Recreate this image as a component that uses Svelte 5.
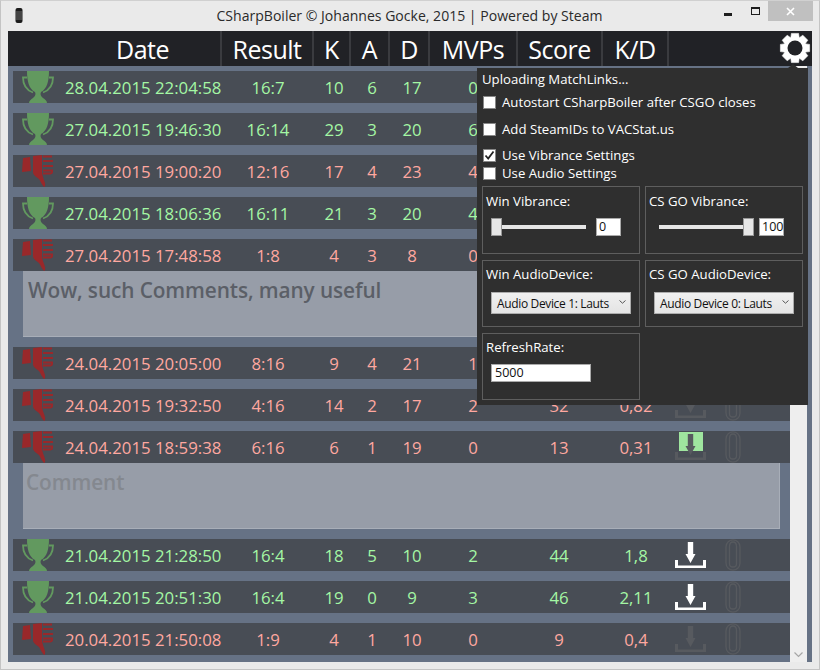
<script>
  const W = 'win', L = 'loss';
  const rows = [
    { r: W, d: '28.04.2015 22:04:58', s: '16:7', k: 10, a: 6, de: 17, m: 0, sc: 0, kd: '', dl: 'none' },
    { r: W, d: '27.04.2015 19:46:30', s: '16:14', k: 29, a: 3, de: 20, m: 6, sc: 0, kd: '', dl: 'none' },
    { r: L, d: '27.04.2015 19:00:20', s: '12:16', k: 17, a: 4, de: 23, m: 4, sc: 0, kd: '', dl: 'none' },
    { r: W, d: '27.04.2015 18:06:36', s: '16:11', k: 21, a: 3, de: 20, m: 4, sc: 0, kd: '', dl: 'none' },
    { r: L, d: '27.04.2015 17:48:58', s: '1:8', k: 4, a: 3, de: 8, m: 0, sc: 0, kd: '', dl: 'none', c: 'Wow, such Comments, many useful' },
    { r: L, d: '24.04.2015 20:05:00', s: '8:16', k: 9, a: 4, de: 21, m: 1, sc: 0, kd: '', dl: 'none' },
    { r: L, d: '24.04.2015 19:32:50', s: '4:16', k: 14, a: 2, de: 17, m: 2, sc: 32, kd: '0,82', dl: 'dim' },
    { r: L, d: '24.04.2015 18:59:38', s: '6:16', k: 6, a: 1, de: 19, m: 0, sc: 13, kd: '0,31', dl: 'active', p: 'Comment' },
    { r: W, d: '21.04.2015 21:28:50', s: '16:4', k: 18, a: 5, de: 10, m: 2, sc: 44, kd: '1,8', dl: 'on' },
    { r: W, d: '21.04.2015 20:51:30', s: '16:4', k: 19, a: 0, de: 9, m: 3, sc: 46, kd: '2,11', dl: 'on' },
    { r: L, d: '20.04.2015 21:50:08', s: '1:9', k: 4, a: 1, de: 10, m: 0, sc: 9, kd: '0,4', dl: 'dim' }
  ];
  const heads = [
    ['Date', 214], ['Result', 92], ['K', 37], ['A', 39], ['D', 40], ['MVPs', 88], ['Score', 85], ['K/D', 66]
  ];
  const gear = (() => {
    const pts = [];
    const n = 8, cx = 16, cy = 16, ro = 15, ri = 11.5;
    for (let i = 0; i < n; i++) {
      const a = (i * 2 * Math.PI) / n - Math.PI / 2;
      const w = 0.24, w2 = 0.36;
      [[ro, -w], [ro, w], [ri, w2], [ri, Math.PI / n * 2 - w2]].forEach(([r, o]) => {
        pts.push((cx + r * Math.cos(a + o)).toFixed(1) + ',' + (cy + r * Math.sin(a + o)).toFixed(1));
      });
    }
    return pts.join(' ');
  })();
</script>

<div class="window">
  <div class="titlebar">
    <svg class="appicon" width="8" height="15" viewBox="0 0 8 15"><rect x="0.5" y="0" width="7" height="15" rx="2" fill="#1c1c1c"/><rect x="1" y="3" width="6" height="9" fill="#444"/></svg>
    <div class="title">CSharpBoiler © Johannes Gocke, 2015 | Powered by Steam</div>
    <div class="controls">
      <span class="min"></span>
      <span class="max"></span>
      <span class="close">
        <svg width="9" height="9" viewBox="0 0 9 9"><path d="M1 1 L8 8 M8 1 L1 8" stroke="#fff" stroke-width="1.6"/></svg>
      </span>
    </div>
  </div>
  <div class="content">
    <div class="header">
      {#each heads as [t, w]}
        <div class="hcell" style="width:{w}px">{t}</div>
      {/each}
      <svg class="gear" width="32" height="32" viewBox="0 0 32 32"><polygon points={gear} fill="#fff" stroke="#fff" stroke-width="0.6" stroke-linejoin="round"/><circle cx="16" cy="16" r="7.500" fill="#212226"/></svg>
    </div>
    <div class="body">
      <div class="list">
        {#each rows as x}
          <div class="row {x.r}">
            <div class="icon">
              {#if x.r === W}
                <svg width="32" height="32" viewBox="0 0 32 32">
                  <path fill="#62995f" d="M5 0H27C27 10 25 18 19 21C18 23 18.500 25 21 27C23 28 25 30 25 32H7C7 30 9 28 11 27C13.500 25 14 23 13 21C7 18 5 10 5 0z"/>
                  <path fill="none" stroke="#62995f" stroke-width="1.800" d="M5 6.500H1C1 13 4 19 11 21.500M27 6.500H31C31 13 28 19 21 21.500"/>
                </svg>
              {:else}
                <svg width="32" height="32" viewBox="0 0 32 32">
                  <path fill="#99282a" d="M1 3L8 2L9 16L0 17zM11 1L20 0V17C20 21 22 24 23 28C23.500 30 23 32 22 32C20 30 19 27 17 24C15 22 12 21 11 18z"/>
                  <path fill="#99282a" d="M21 0.500H30V2.500H21zM21 5H31V7H21zM21 10H31V12H21zM21 14.500H31V17C31 19 29 19.500 27 19.500H21V17.500H29V16.500H21z"/>
                </svg>
              {/if}
            </div>
            <div class="date">{x.d}</div>
            <div class="c res">{x.s}</div>
            <div class="c k">{x.k}</div>
            <div class="c a">{x.a}</div>
            <div class="c de">{x.de}</div>
            <div class="c mvp">{x.m}</div>
            <div class="c sc">{x.sc || ''}</div>
            <div class="c kd">{x.kd}</div>
            {#if x.dl !== 'none'}
              <div class="dl {x.dl}">
                {#if x.dl === 'active'}<span class="fill"></span>{/if}
                <svg width="31" height="28" viewBox="0 0 31 28"><path d="M12.800 1H18.200V13H20.500L15.500 22L10.500 13H12.800z" fill="currentColor"/><path d="M0 19H3V24.500H28V19H31V27H0z" fill="currentColor"/></svg>
              </div>
              <svg class="clip" width="16" height="32" viewBox="0 0 16 32"><path d="M4.500 25V7.500C4.500 1.500 11.500 1.500 11.500 7.500V25C11.500 29 4.500 29 4.500 25" fill="none" stroke="#575a5f" stroke-width="1.300"/><path d="M1 24V8C1 -1.500 15 -1.500 15 8V24C15 33.500 1 33.500 1 24" fill="none" stroke="#575a5f" stroke-width="1.300"/></svg>
            {/if}
          </div>
          {#if x.c}<div class="comment">{x.c}</div>{/if}
          {#if x.p}<div class="comment ph">{x.p}</div>{/if}
        {/each}
      </div>
      <div class="scroll">
        <svg class="chev" width="9" height="6" viewBox="0 0 9 6"><path d="M.5 .5 L4.500 4.500 L8.500 .5" fill="none" stroke="#a6a6a6" stroke-width="1.200"/></svg>
      </div>
    </div>

    <div class="popup">
      <div class="status">Uploading MatchLinks...</div>
      <label class="cb first"><span class="box"></span>Autostart CSharpBoiler after CSGO closes</label>
      <label class="cb second"><span class="box"></span>Add SteamIDs to VACStat.us</label>
      <label class="cb third"><span class="box"><svg width="11" height="11" viewBox="0 0 11 11"><path d="M1.500 5.500 L4.200 8.500 L9.500 1.500" fill="none" stroke="#222" stroke-width="1.800"/></svg></span>Use Vibrance Settings</label>
      <label class="cb fourth"><span class="box"></span>Use Audio Settings</label>
      <div class="grid">
        <div class="group">
          <div class="glabel">Win Vibrance:</div>
          <div class="slider left">
            <div class="track"><span class="thumb"></span></div>
            <div class="num">0</div>
          </div>
        </div>
        <div class="group">
          <div class="glabel">CS GO Vibrance:</div>
          <div class="slider right">
            <div class="track end"><span class="thumb"></span></div>
            <div class="num">100</div>
          </div>
        </div>
        <div class="group short">
          <div class="glabel">Win AudioDevice:</div>
          <div class="select"><span class="val">Audio Device 1: Lauts</span><svg width="7" height="4" viewBox="0 0 7 4"><path d="M.5 .5 L3.500 3.200 L6.500 .5" fill="none" stroke="#555"/></svg></div>
        </div>
        <div class="group short">
          <div class="glabel">CS GO AudioDevice:</div>
          <div class="select"><span class="val">Audio Device 0: Lauts</span><svg width="7" height="4" viewBox="0 0 7 4"><path d="M.5 .5 L3.500 3.200 L6.500 .5" fill="none" stroke="#555"/></svg></div>
        </div>
        <div class="group short">
          <div class="glabel">RefreshRate:</div>
          <div class="field">5000</div>
        </div>
      </div>
    </div>
  </div>
</div>

<style>
  :global(body) { margin: 0; background: #eaeaea; font-family: "Open Sans", "Noto Sans", sans-serif; }
  .window {
    width: 820px; height: 670px; box-sizing: border-box; border: 1px solid #c4c4c4; border-top-color: #d0d0d0;
    background: #eaeaea; display: flex; flex-direction: column; overflow: hidden;
  }
  .titlebar { height: 30px; flex: none; position: relative; display: flex; justify-content: center; }
  .appicon { position: absolute; left: 14px; top: 7px; }
  .title { font-size: 14.050px; line-height: 30px; color: #2a2a2a; margin-left: -1px; }
  .controls { position: absolute; right: 6px; top: 0; display: flex; }
  .controls span { display: block; }
  .min { position: absolute; right: 81px; top: 12px; width: 8px; height: 3px; background: #1e1e1e; }
  .max { position: absolute; right: 53px; top: 6px; width: 7px; height: 5px; border: 1.500px solid #1e1e1e; border-top-width: 2px; }
  .close { width: 45px; height: 20px; background: #c0c0c0; display: flex !important; align-items: center; justify-content: center; }
  .content { margin-left: 7px; width: 804px; height: 631px; background: #667285; position: relative; }
  .header { height: 35px; background: #212226; display: flex; color: #fff; font-size: 25px; position: relative; }
  .hcell { box-sizing: border-box; border-right: 2px solid #3a3b3f; text-align: center; line-height: 37px; flex: none; letter-spacing: -0.5px; }
  .hcell:first-child { padding-left: 57px; }
  .gear { position: absolute; left: 771px; top: 1px; }
  .body { display: flex; height: 596px; box-sizing: border-box; }
  .list { width: 782px; padding: 5px 0 0 5px; box-sizing: border-box; flex: none; }
  .row { height: 32px; background: #484d55; display: flex; align-items: center; margin-bottom: 10px; font-size: 16.800px; position: relative; }
  .row.win { color: #a4f7a4; }
  .row.loss { color: #ffa8a0; }
  .icon { width: 32px; height: 32px; margin-left: 9px; flex: none; }
  .date { margin-left: 11px; width: 156px; flex: none; white-space: nowrap; }
  .c { text-align: center; flex: none; }
  .res { width: 92px; margin-left: 1px; }
  .k { width: 38px; margin-left: 1px; }
  .a { width: 38px; }
  .de { width: 40px; margin-left: 1px; }
  .mvp { width: 92px; margin-left: -5px; }
  .sc { width: 80px; }
  .kd { width: 74px; }
  .dl { position: absolute; left: 662px; top: 2px; width: 31px; height: 28px; color: #575a5f; line-height: 0; }
  .dl.on { color: #fff; }
  .dl svg { position: relative; }
  .dl .fill { position: absolute; left: 4px; top: -1px; width: 24px; height: 19px; background: #9fe59f; }
  .clip { position: absolute; left: 712px; top: 0; }
  .row:has(+ .comment) { margin-bottom: 0; }
  .comment {
    margin: 0 0 10px 10px; width: 757px; height: 66px; box-sizing: border-box; background: #979da8;
    border-right: 1px solid #a8aeb8; border-bottom: 1px solid #a8aeb8;
    color: #5b5f67; font-size: 20.800px; font-weight: 600; padding: 4px 0 0 5px; line-height: 30px; letter-spacing: -0.1px;
  }
  .comment.ph { color: #84888f; padding-left: 3px; }
  .scroll { width: 17px; background: #eeeeee; position: relative; flex: none; }
  .chev { position: absolute; left: 4px; bottom: 4px; }
  .popup {
    position: absolute; left: 469px; top: 37px; width: 331px; height: 337px; box-sizing: border-box;
    background: #2f2f2f; color: #fff; font-size: 13.200px; padding: 2px 5px 0;
  }
  .popup::before {
    content: ""; position: absolute; left: 311px; top: -4px; width: 0; height: 0;
    border-left: 5px solid transparent; border-right: 5px solid transparent; border-bottom: 4px solid #2f2f2f;
  }
  .status { line-height: 18px; }
  .cb { display: flex; align-items: center; height: 18px; gap: 6px; padding-left: 1px; }
  .cb.first { margin-top: 5px; }
  .cb.second { margin-top: 9px; }
  .cb.third { margin-top: 8px; }
  .cb.fourth { margin-top: 0; }
  .box { width: 11px; height: 11px; border: 1px solid #888; background: #fff; display: flex; flex: none; }
  .grid { margin-top: 4px; display: grid; grid-template-columns: 158px 158px; column-gap: 5px; row-gap: 6px; }
  .group { height: 68px; box-sizing: border-box; border: 1px solid #5e5e5e; padding: 5px 3px 0; position: relative; }
  .group.short { height: 67px; padding-top: 4px; }
  .glabel { line-height: 18px; }
  .slider { position: absolute; left: 8px; top: 31px; display: flex; align-items: center; height: 18px; }
  .track { width: 95px; height: 4px; background: #e6e6e6; position: relative; }
  .thumb { position: absolute; left: 0; top: -7px; width: 9px; height: 16px; background: #e6e6e6; border: 1px solid #999; display: block; }
  .track.end .thumb { left: auto; right: -11px; }
  .slider.right { left: 13px; }
  .slider.right .track { width: 84px; }
  .slider.left .num { margin-left: 10px; }
  .slider.right .num { margin-left: 16px; }
  .num { width: 21px; height: 16px; background: #fff; border: 1px solid #aaa; color: #111; font-size: 12.500px; line-height: 16px; padding-left: 2px; }
  .select { position: absolute; left: 8px; top: 31px; width: 140px; height: 22px; box-sizing: border-box; background: linear-gradient(#f0f0f0,#e4e4e4); border: 1px solid #acacac; color: #111; font-size: 12px; letter-spacing: -0.35px; display: flex; align-items: center; padding-left: 5px; }
  .val { width: 122px; white-space: nowrap; flex: none; }
  .select svg { margin-top: -3px; flex: none; }
  .field { position: absolute; left: 8px; top: 30px; width: 95px; height: 16px; background: #fff; border: 1px solid #aaa; color: #111; font-size: 12.500px; line-height: 16px; padding-left: 3px; }
</style>
